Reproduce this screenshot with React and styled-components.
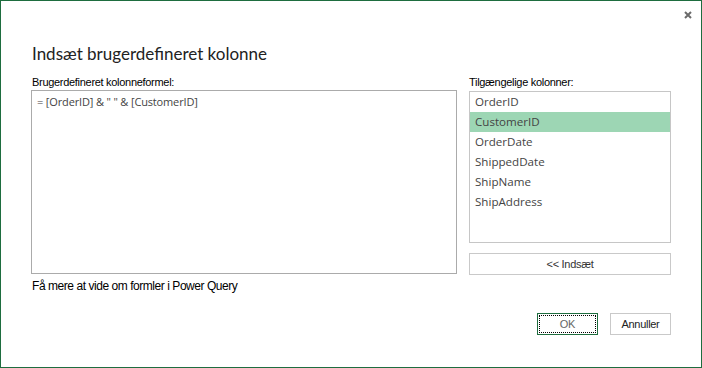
import React, { useState } from 'react';
import styled, { createGlobalStyle } from 'styled-components';

const GlobalStyle = createGlobalStyle`
  html, body {
    margin: 0;
    padding: 0;
    background: #ffffff;
  }
  * {
    box-sizing: border-box;
  }
`;

const Dialog = styled.div`
  width: 702px;
  height: 368px;
  border: 1px solid #1e6d3f;
  background: #ffffff;
  display: flex;
  flex-direction: column;
  font-family: "Liberation Sans", Arial, sans-serif;
`;

const Header = styled.div`
  display: flex;
  justify-content: flex-end;
  padding: 8px 7px 0 0;
  height: 24px;
`;

const CloseButton = styled.button`
  width: 12px;
  height: 12px;
  padding: 0;
  border: none;
  background: transparent;
  display: flex;
  align-items: center;
  justify-content: center;
  cursor: pointer;
`;

const Title = styled.h1`
  margin: 19px 0 0 31px;
  font-family: "Lato", "Open Sans", sans-serif;
  font-weight: 400;
  font-size: 17px;
  line-height: 20px;
  color: #222222;
`;

const Body = styled.div`
  display: grid;
  grid-template-columns: 426px 202px;
  column-gap: 12px;
  padding: 0 30px 0 30px;
  margin-top: 12px;
`;

const Column = styled.div`
  display: flex;
  flex-direction: column;
`;

const Label = styled.div`
  font-size: 11px;
  line-height: 13px;
  height: 14px;
  padding-left: ${p => (p.indent ? '1px' : '0')};
  color: #000000;
  letter-spacing: -0.3px;
`;

const FormulaBox = styled.div`
  height: 184px;
  border: 1px solid #ababab;
  padding: 4px 5px;
  font-family: "Open Sans", "Liberation Sans", sans-serif;
  font-size: 11px;
  line-height: 14px;
  color: #444444;
  letter-spacing: -0.15px;
`;

const LearnMore = styled.div`
  margin-top: 5px;
  padding-left: 1px;
  font-size: 12px;
  line-height: 14px;
  color: #000000;
  letter-spacing: -0.45px;
`;

const ListBox = styled.div`
  height: 152px;
  margin-top: 1px;
  border: 1px solid #c6c6c6;
  display: flex;
  flex-direction: column;
`;

const ListItem = styled.div`
  height: 20px;
  line-height: 20px;
  padding-left: 5px;
  font-family: "Open Sans", "Liberation Sans", sans-serif;
  font-size: 11.6px;
  color: #444444;
  background: ${p => (p.selected ? '#9dd6b4' : 'transparent')};
  cursor: default;
`;

const Button = styled.button`
  height: 22px;
  padding: 0;
  border: 1px solid ${p => (p.primary ? '#1e6d3f' : '#c9c9c9')};
  outline: ${p => (p.primary ? '1px dotted #000000' : 'none')};
  outline-offset: -3px;
  background: #ffffff;
  font-family: "Liberation Sans", Arial, sans-serif;
  font-size: 11px;
  letter-spacing: -0.3px;
  color: ${p => (p.primary ? '#666666' : '#222222')};
  width: ${p => p.width || 'auto'};
  cursor: pointer;
`;

const InsertButton = styled(Button)`
  margin-top: 10px;
  width: 100%;
  color: #333333;
`;

const Footer = styled.div`
  display: flex;
  justify-content: flex-end;
  gap: 12px;
  padding: 0 30px 0 0;
  margin-top: 20px;
`;

const columns = ['OrderID', 'CustomerID', 'OrderDate', 'ShippedDate', 'ShipName', 'ShipAddress'];

const App = () => {
  const [selected, setSelected] = useState('CustomerID');

  return (
    <>
      <GlobalStyle />
      <Dialog>
        <Header>
          <CloseButton aria-label="Luk">
            <svg width="8" height="8" viewBox="0 0 8 8">
              <path d="M1 1 L7 7 M7 1 L1 7" stroke="#6b6b6b" strokeWidth="2" />
            </svg>
          </CloseButton>
        </Header>
        <Title>Indsæt brugerdefineret kolonne</Title>
        <Body>
          <Column>
            <Label indent>Brugerdefineret kolonneformel:</Label>
            <FormulaBox>= [OrderID] &amp; " " &amp; [CustomerID]</FormulaBox>
            <LearnMore>Få mere at vide om formler i Power Query</LearnMore>
          </Column>
          <Column>
            <Label>Tilgængelige kolonner:</Label>
            <ListBox>
              {columns.map(col => (
                <ListItem key={col} selected={col === selected} onClick={() => setSelected(col)}>
                  {col}
                </ListItem>
              ))}
            </ListBox>
            <InsertButton>&lt;&lt; Indsæt</InsertButton>
          </Column>
        </Body>
        <Footer>
          <Button primary width="61px">OK</Button>
          <Button width="61px">Annuller</Button>
        </Footer>
      </Dialog>
    </>
  );
};

export default App;
